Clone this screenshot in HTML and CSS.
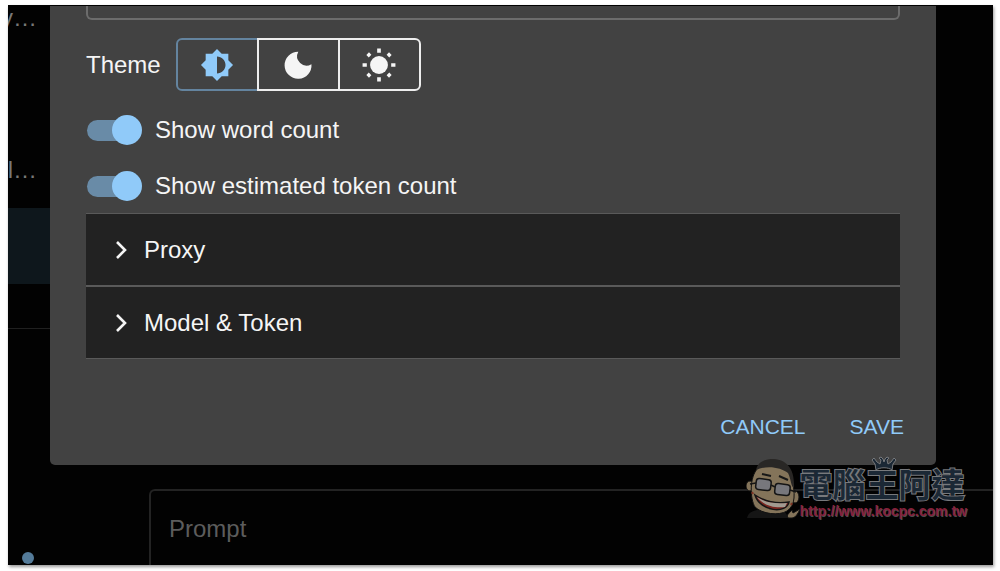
FILE: index.html
```html
<!DOCTYPE html>
<html lang="en">
<head>
    <meta charset="UTF-8">
    <meta name="viewport" content="width=device-width, initial-scale=1.0">
    <title>Settings</title>
    <link rel="stylesheet" href="styles.css">
</head>
<body>
    <div class="app">
        <aside class="sidebar">
            <ul class="chats">
                <li><span>y…</span></li>
                <li></li>
                <li><span>l…</span></li>
                <li class="selected"></li>
            </ul>
            <hr class="divider">
            <span class="status-dot"></span>
        </aside>
        <main class="chat">
            <textarea class="prompt" placeholder="Prompt" aria-label="Prompt"></textarea>
        </main>

        <div class="dialog" role="dialog" aria-label="Settings">
            <input class="field" type="text" aria-label="Setting">

            <div class="theme">
                <span id="theme-label">Theme</span>
                <div class="toggle-group" role="group" aria-labelledby="theme-label">
                    <button type="button" class="active" aria-label="System">
                        <svg viewBox="0 0 24 24"><path d="M20 15.31 23.31 12 20 8.69V4h-4.69L12 .69 8.69 4H4v4.69L.69 12 4 15.31V20h4.69L12 23.31 15.31 20H20v-4.69zM12 18V6c3.31 0 6 2.69 6 6s-2.69 6-6 6z"/></svg>
                    </button>
                    <button type="button" aria-label="Dark">
                        <svg viewBox="0 0 24 24"><path d="M12.2 2.7A6.6 6.6 0 0 0 21.5 11.4 9.5 9.5 0 1 1 12.2 2.7z"/></svg>
                    </button>
                    <button type="button" aria-label="Light">
                        <svg viewBox="0 0 24 24">
                            <circle cx="12" cy="12" r="6.3"/>
                            <path class="rays" d="M12 .4v3M12 20.6v3M.4 12h3M20.6 12h3M4 4l1.7 1.7M18.3 18.3 20 20M4 20l1.7-1.7M18.3 5.7 20 4"/>
                        </svg>
                    </button>
                </div>
            </div>

            <label class="switch"><input type="checkbox" checked>Show word count</label>
            <label class="switch"><input type="checkbox" checked>Show estimated token count</label>

            <div class="accordion">
                <button type="button" aria-expanded="false">
                    <svg viewBox="0 0 13 20"><path d="M2 2l8 8-8 8"/></svg>Proxy
                </button>
                <button type="button" aria-expanded="false">
                    <svg viewBox="0 0 13 20"><path d="M2 2l8 8-8 8"/></svg>Model &amp; Token
                </button>
            </div>

            <div class="actions">
                <button type="button">CANCEL</button>
                <button type="button">SAVE</button>
            </div>
        </div>

        <div class="watermark">
            <svg class="face" viewBox="0 0 54 62">
                <path d="M1 61c1-5 5-7 10-8h20c7 0 10 3 11 8z" fill="#151515"/>
                <path d="M42 61c-2-4 2-5 4-8l1 3 7-4c-2 5-5 9-8 9z" fill="#84745a" stroke="#111"/>
                <ellipse cx="4" cy="29" rx="4" ry="5" fill="#84745a" stroke="#111"/>
                <ellipse cx="49" cy="40" rx="4" ry="6" fill="#84745a" stroke="#111"/>
                <path d="M12 11C20 3 43 6 46 22c3 14 4 26-5 32-8 5-25 3-32-4C4 42 3 20 12 11z" fill="#84745a" stroke="#111"/>
                <path d="M10 13C12 4 20 2 28 2c13 1 21 10 20 29-3-1-3-9-6-15C35 10 20 8 10 13z" fill="#292725"/>
                <path d="M16 17l9 2M33 19l9 4" stroke="#171717" stroke-width="2" fill="none"/>
                <rect x="10" y="22" width="15" height="11" rx="3" fill="#77777c" stroke="#151515" stroke-width="1.5" transform="rotate(7 17 27)"/>
                <rect x="29" y="27" width="15" height="11" rx="3" fill="#77777c" stroke="#151515" stroke-width="1.5" transform="rotate(7 36 32)"/>
                <path d="M25 28l4 2M4 27l6-1M44 33l6 2" stroke="#151515" stroke-width="1.5"/>
                <path d="M9 38c9 6 21 9 34 7-2 12-29 10-34-7z" fill="#79251f" stroke="#151515" stroke-width="1.5"/>
                <path d="M11 40c9 6 19 7 30 6l-2 4c-11 1-21-1-28-10z" fill="#a29b91"/>
                <path d="M6 35l1 2M46 46l-1 2" stroke="#7f3424" stroke-width="2"/>
            </svg>
            <div class="brand">
                <svg class="crown" viewBox="0 0 26 15"><path d="M5 14 4 8 1 4l2-2 3 4 3 2 1-4-2-2 2-1 2 2 1 3 1-3 2-2 2 1-2 2 1 4 3-2 3-4 2 2-3 4-1 6c-4-3-12-3-16 0z"/></svg>
                <span class="brand-name" lang="zh-Hant">電腦王阿達</span>
                <span class="brand-url">http://www.kocpc.com.tw</span>
            </div>
        </div>
    </div>
</body>
</html>
```
FILE: styles.css
```css
* {
    margin: 0;
    padding: 0;
    box-sizing: border-box;
}
body {
    display: flex;
    min-height: 100vh;
    padding: 5px 7px 6px 8px;
    background: #fff;
    color: #f5f5f5;
    font-family: "Liberation Sans", Arial, sans-serif;
    font-size: 24px;
    line-height: 28px;
}
button, input, textarea {
    font: inherit;
    color: inherit;
}
button {
    background: none;
    border: none;
    cursor: pointer;
}
.app {
    position: relative;
    display: flex;
    flex: 1;
    overflow: hidden;
    background: #020202;
    box-shadow: 1px 2px 3px rgba(0, 0, 0, 0.4);
}

/* page behind the dialog */
.sidebar {
    display: flex;
    flex-direction: column;
    width: 126px;
    color: #777;
}
.chats {
    margin-top: -25px;
    list-style: none;
}
.chats li {
    display: flex;
    align-items: center;
    height: 76px;
}
.chats span {
    display: flex;
    justify-content: flex-end;
    width: 29px;
    overflow: hidden;
}
.chats .selected {
    background: #0e171c;
}
.divider {
    margin-top: 44px;
    border: none;
    border-top: 1px solid #202020;
}
.status-dot {
    width: 12px;
    height: 12px;
    margin: auto 0 1px 14px;
    border-radius: 50%;
    background: #547b99;
}
.chat {
    display: flex;
    flex: 1;
    align-items: flex-end;
    padding-left: 15px;
}
.prompt {
    width: 100%;
    height: 76px;
    padding: 24px 18px 0;
    border: 2px solid #232323;
    border-width: 2px 0 0 2px;
    border-radius: 6px 0 0 0;
    outline: none;
    resize: none;
    background: none;
}
.prompt::placeholder {
    color: #5c5c5c;
    opacity: 1;
}

.dialog {
    position: absolute;
    top: 1px;
    left: 42px;
    right: 57px;
    display: flex;
    flex-direction: column;
    padding: 0 36px 16px;
    border-radius: 0 0 5px 5px;
    background: #424242;
}
.field {
    height: 14px;
    padding: 0 16px;
    border: 2px solid #6c6c6c;
    border-top: none;
    border-radius: 0 0 6px 6px;
    outline: none;
    background: none;
}
.theme {
    display: flex;
    align-items: center;
    gap: 15px;
    margin: 18px 0 11px;
}
.toggle-group {
    display: flex;
}
.toggle-group button {
    display: flex;
    align-items: center;
    justify-content: center;
    width: 83px;
    height: 53px;
    border: 2px solid #eee;
}
.toggle-group button + button {
    margin-left: -2px;
}
.toggle-group button:first-child {
    border-radius: 6px 0 0 6px;
}
.toggle-group button:last-child {
    border-radius: 0 6px 6px 0;
}
.toggle-group .active {
    border-color: #64849f;
    color: #90caf9;
}
.toggle-group svg {
    width: 34px;
    height: 34px;
    fill: currentColor;
}
.rays {
    stroke: currentColor;
    stroke-width: 2.6;
}

.switch {
    display: flex;
    align-items: center;
    gap: 13px;
    height: 56px;
    padding-left: 1px;
    cursor: pointer;
}
.switch input {
    position: relative;
    width: 55px;
    height: 30px;
    appearance: none;
    cursor: pointer;
}
.switch input::before {
    content: "";
    position: absolute;
    top: 5px;
    left: 0;
    width: 50px;
    height: 21px;
    border-radius: 11px;
    background: #698ba7;
}
.switch input::after {
    content: "";
    position: absolute;
    top: 0;
    left: 0;
    width: 30px;
    height: 30px;
    border-radius: 50%;
    background: #90caf9;
}
.switch input:checked::after {
    left: 25px;
}

.accordion {
    display: flex;
    flex-direction: column;
    gap: 2px;
    margin-top: -1px;
    padding: 1px 0;
    background: #5a5a5a;
}
.accordion button {
    display: flex;
    align-items: center;
    gap: 16px;
    height: 71px;
    padding: 0 29px;
    background: #222;
    text-align: left;
}
.accordion svg {
    width: 13px;
    height: 20px;
    fill: none;
    stroke: #f5f5f5;
    stroke-width: 2.6;
}
.actions {
    display: flex;
    justify-content: flex-end;
    gap: 22px;
    margin: 46px -15px 0 0;
    color: #90caf9;
    font-size: 21px;
}
.actions button {
    height: 44px;
    padding: 0 11px;
}

.watermark {
    position: absolute;
    right: 26px;
    bottom: 46px;
    display: flex;
    align-items: flex-end;
}
.face {
    width: 54px;
    height: 62px;
}
.brand {
    position: relative;
    display: flex;
    flex-direction: column;
}
.crown {
    position: absolute;
    top: -13px;
    left: 71px;
    width: 26px;
    height: 15px;
    fill: #1b2835;
    stroke: #77797c;
}
.brand-name {
    color: #1b2835;
    font-family: "Liberation Sans", "Noto Sans CJK TC", sans-serif;
    font-size: 33px;
    font-weight: bold;
    line-height: 34px;
    -webkit-text-stroke: 2px #77797c;
    paint-order: stroke fill;
}
.brand-url {
    color: #85203a;
    font-size: 14px;
    font-weight: bold;
    line-height: 16px;
    text-shadow: 1px 1px #4c4c4e;
}
```
